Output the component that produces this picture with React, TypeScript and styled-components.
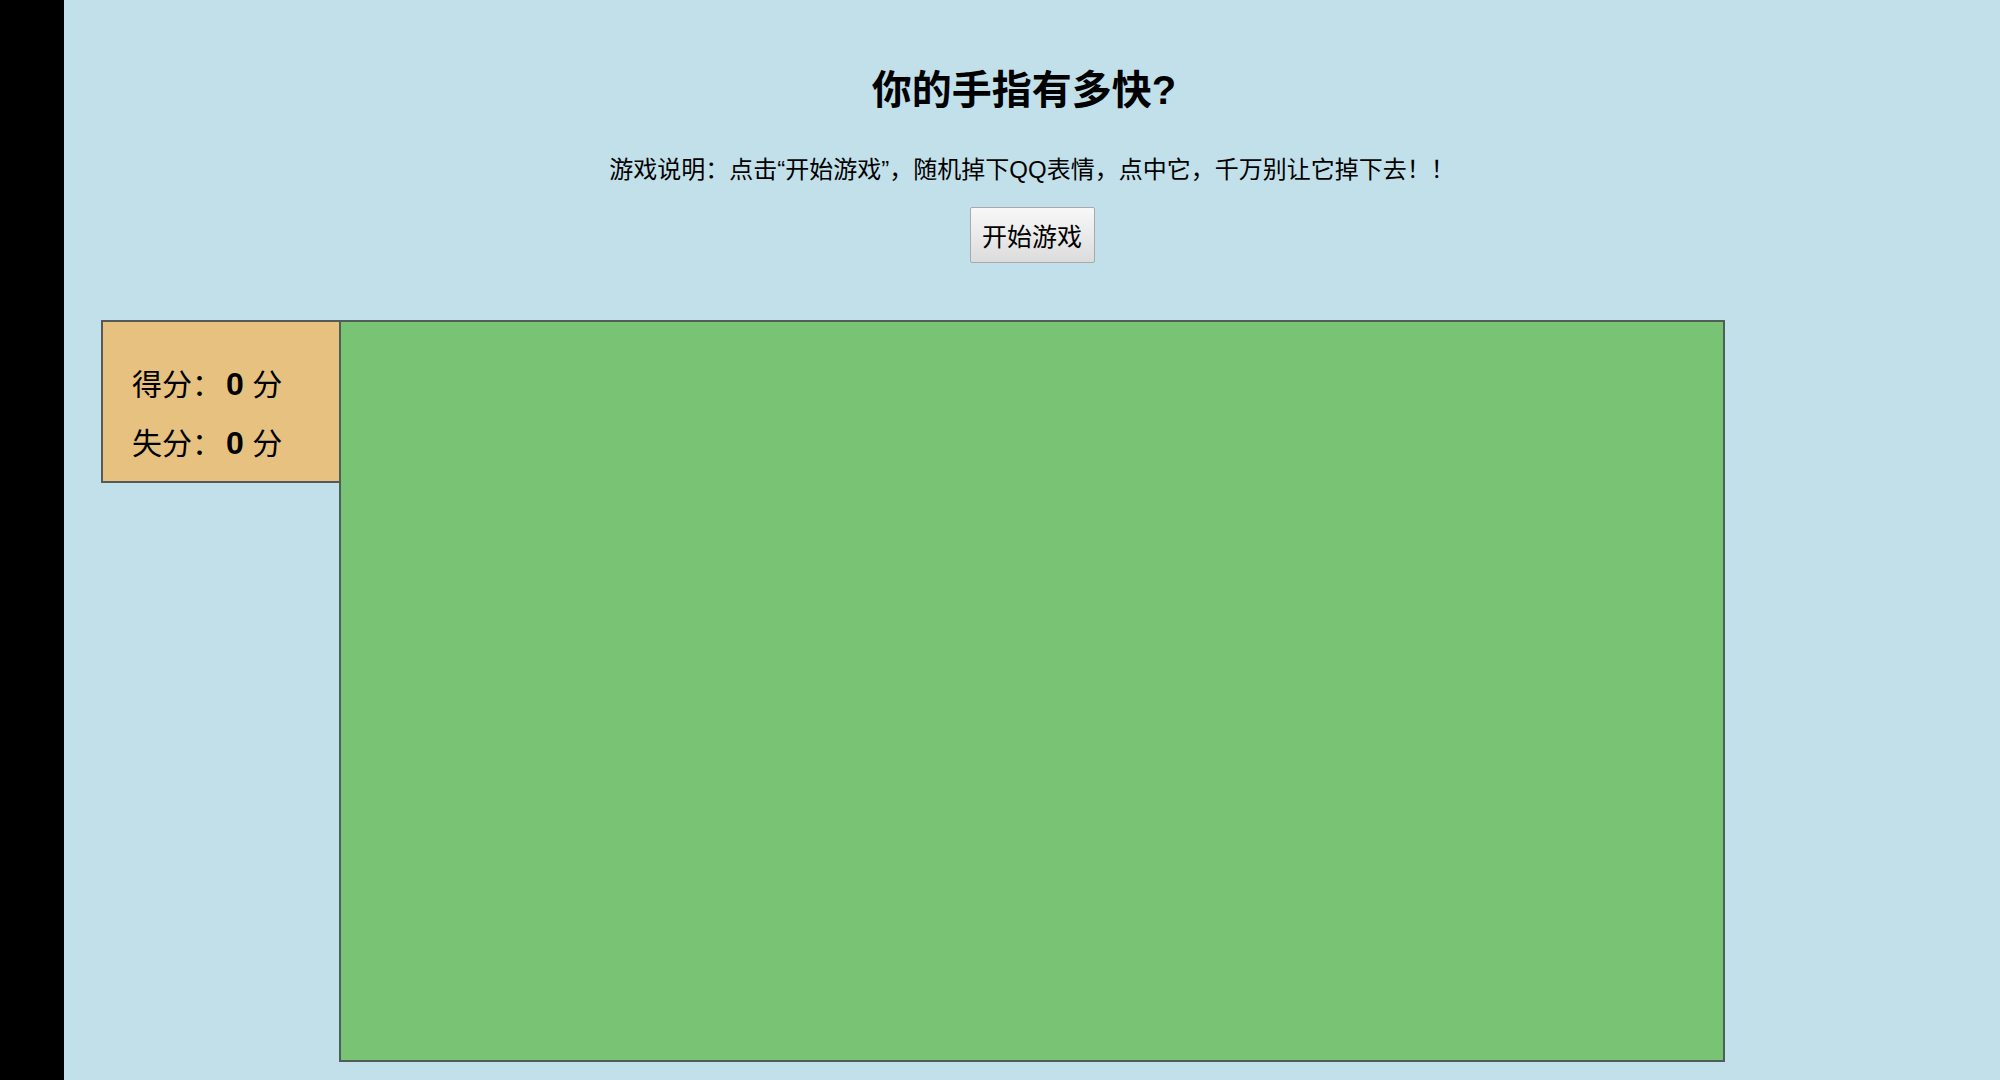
import React from "react";
import styled, { createGlobalStyle } from "styled-components";

const Global = createGlobalStyle`
  html, body { margin: 0; padding: 0; }
  body {
    font-family: "Liberation Sans", "Noto Sans CJK SC", sans-serif;
    color: #000;
    background: #c2e0ea;
  }
`;

const Page = styled.div`
  display: flex;
  width: 2000px;
  height: 1080px;
  overflow: hidden;
`;

const SideBar = styled.div`
  width: 64px;
  flex: none;
  background: #000;
`;

const Main = styled.main`
  flex: 1;
  display: flex;
  flex-direction: column;
  background: #c2e0ea;
`;

const Header = styled.header`
  display: flex;
  flex-direction: column;
  align-items: center;
`;

const Title = styled.h1`
  margin: 66px 16px 0 0;
  font-size: 40px;
  line-height: 48px;
  font-weight: 700;
  font-family: "Liberation Sans", "Noto Sans CJK SC", sans-serif;
`;

const Intro = styled.p`
  margin: 41px 0 0;
  font-size: 24px;
  line-height: 30px;
`;

const StartButton = styled.button`
  margin-top: 22px;
  width: 125px;
  height: 56px;
  padding: 0;
  font-family: "Liberation Sans", "Noto Sans CJK SC", sans-serif;
  font-size: 25px;
  color: #000;
  background: linear-gradient(#f8f8f8, #dcdcdc);
  border: 1px solid #a9a9a9;
  border-radius: 2px;
  cursor: pointer;
`;

const Game = styled.section`
  display: flex;
  align-items: flex-start;
  margin: 57px 0 0 37px;
`;

const ScoreBox = styled.div`
  width: 238px;
  box-sizing: border-box;
  padding: 33px 0 8px 29px;
  background: #e6c17f;
  border: 2px solid #545a58;
  border-right: none;
`;

const ScoreLine = styled.div`
  font-size: 30px;
  line-height: 58px;
  white-space: nowrap;
`;

const Num = styled.b`
  font-weight: 700;
  font-size: 32px;
  margin-left: 4px;
`;

const Stage = styled.div`
  width: 1386px;
  height: 742px;
  box-sizing: border-box;
  background: #78c374;
  border: 2px solid #4f5e58;
`;

export default function App() {
  return (
    <>
      <Global />
      <Page>
        <SideBar />
        <Main>
          <Header>
            <Title>你的手指有多快?</Title>
            <Intro>游戏说明：点击“开始游戏”，随机掉下QQ表情，点中它，千万别让它掉下去！！</Intro>
            <StartButton>开始游戏</StartButton>
          </Header>
          <Game>
            <ScoreBox>
              <ScoreLine>
                得分：<Num>0</Num> 分
              </ScoreLine>
              <ScoreLine>
                失分：<Num>0</Num> 分
              </ScoreLine>
            </ScoreBox>
            <Stage />
          </Game>
        </Main>
      </Page>
    </>
  );
}
